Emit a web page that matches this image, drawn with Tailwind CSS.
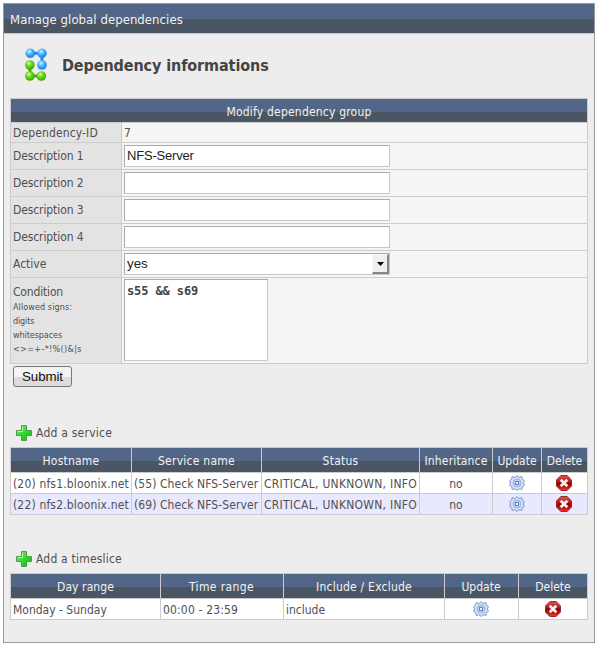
<!DOCTYPE html>
<html lang="en">
<head>
<meta charset="utf-8">
<title>Manage global dependencies</title>
<script src="https://cdn.jsdelivr.net/npm/@tailwindcss/browser@4"></script>
</head>
<body class="bg-white font-['DejaVu_Sans_Condensed','DejaVu_Sans',sans-serif] text-[12px] leading-[14px] text-[#505050]">

<svg class="absolute size-0" aria-hidden="true">
  <defs>
    <radialGradient id="blue" cx=".4" cy=".32" r=".68"><stop offset="0" stop-color="#e4f8ff"/><stop offset=".3" stop-color="#6cc8ff"/><stop offset=".7" stop-color="#2a9af5"/><stop offset="1" stop-color="#2389e6"/></radialGradient>
    <radialGradient id="green" cx=".4" cy=".32" r=".68"><stop offset="0" stop-color="#e2ffc0"/><stop offset=".3" stop-color="#86e238"/><stop offset=".7" stop-color="#4fc40c"/><stop offset="1" stop-color="#3fa50a"/></radialGradient>
    <linearGradient id="plusfill" x1="0" y1="0" x2="1" y2="1"><stop offset="0" stop-color="#8cf07a"/><stop offset=".5" stop-color="#2fdc2a"/><stop offset="1" stop-color="#12b312"/></linearGradient>
    <linearGradient id="red" x1="0" y1="0" x2="0" y2="1"><stop offset="0" stop-color="#d9564f"/><stop offset=".42" stop-color="#c01414"/><stop offset=".5" stop-color="#8e0000"/><stop offset=".75" stop-color="#c80c0c"/><stop offset="1" stop-color="#f03a30"/></linearGradient>
  </defs>
  <symbol id="plus" viewBox="0 0 16 16">
    <path d="M5.500 .6h5v4.900h5v5h-5v4.900h-5v-4.900h-5v-5h5z" fill="url(#plusfill)" stroke="#4f9a4c" stroke-width="1"/>
    <path d="M6.500 6.500v-5M1.500 6.500h5" stroke="#b9f7ae" stroke-width=".9" fill="none"/>
  </symbol>
  <symbol id="gear" viewBox="0 0 16 16">
    <path d="M8 .6l2 1.900 2.900-.9.4 2.600 2.100 1.500-1 2.300 1 2.400-2.200 1.300-.3 2.700-2.800-.6L8 15.400l-2.100-1.600-2.800.6-.3-2.700-2.200-1.300 1-2.400-1-2.300 2.100-1.500.4-2.600 2.900.9z" fill="#d6e1f7" stroke="#7e9ad2" stroke-width="1"/>
    <circle cx="8" cy="8" r="4" fill="#bfd0f1" stroke="#93abdd" stroke-width=".9"/>
    <rect x="6.500" y="6.500" width="3" height="3" fill="#f1f5fd" stroke="#6482c6" stroke-width="1"/>
  </symbol>
  <symbol id="delete" viewBox="0 0 16 16">
    <path d="M4.900 .5h6.200l4.400 4.400v6.200l-4.400 4.400H4.900L.5 11.100V4.900z" fill="url(#red)" stroke="#8d2020" stroke-width=".9"/>
    <path d="M4.700 4.700l6.600 6.600M11.300 4.700l-6.600 6.600" stroke="#f2f2f2" stroke-width="2.800"/>
  </symbol>
</svg>

<main class="ml-[3px] mt-[3px] flex h-[640px] w-[592px] flex-col border border-[#999] bg-[#ededed]">
  <header class="flex h-[30px] shrink-0 items-center border-b border-[#c4c4c4] bg-linear-to-b from-[#526788] from-[15px] to-[#4b5665] to-[15px] pl-[6px] pt-[2px] text-[13px] tracking-[0.06px] text-[#f2f2f2]">Manage global dependencies</header>

  <div class="flex h-[64px] shrink-0 items-center pl-[19px]">
    <svg class="-mt-[3px] mb-[3px] h-[36px] w-[28px]" viewBox="0 0 28 36">
      <path d="M7 8.300h12V20" fill="none" stroke="#2580e0" stroke-width="3"/>
      <path d="M7 20v11h11.500" fill="none" stroke="#46a80e" stroke-width="3"/>
      <g fill="url(#blue)"><circle cx="7.300" cy="8.300" r="4.800"/><circle cx="19" cy="8.300" r="4.800"/><circle cx="19" cy="20" r="4.800"/></g>
      <g fill="url(#green)"><circle cx="6.800" cy="20" r="4.800"/><circle cx="6.800" cy="31" r="4.800"/><circle cx="18.300" cy="31" r="4.800"/></g>
    </svg>
    <h1 class="ml-[11px] text-[16px] leading-[20px] font-bold tracking-[-0.1px] text-[#444]">Dependency informations</h1>
  </div>

  <section class="ml-[6px] grid w-[578px] shrink-0 grid-cols-[110px_465px] grid-rows-[23px_19px_26px_26px_26px_26px_26px_85px] gap-px bg-[#ccc] p-px *:flex">
    <div class="col-span-2 items-center justify-center bg-linear-to-b from-[#526788] from-[13px] to-[#4b5665] to-[13px] pt-[2px] tracking-[0.2px] text-[#f2f2f2]">Modify dependency group</div>

    <div class="items-center bg-[#e3e3e3] pl-[2px] pt-px tracking-[0.13px]">Dependency-ID</div>
    <div class="items-center bg-[#f5f5f5] pl-[2px] pt-px">7</div>

    <div class="items-center bg-[#e3e3e3] pl-[2px] tracking-[-0.1px]">Description 1</div>
    <div class="bg-[#f5f5f5] pl-[2px] pt-[2px]"><div class="flex h-[22px] w-[266px] items-center border border-[#c8c8c8] border-t-[#aaa] border-l-[#aaa] bg-white pl-[2px] font-['Liberation_Sans',Arial,sans-serif] text-[13px] tracking-[-0.2px] text-[#222]">NFS-Server</div></div>

    <div class="items-center bg-[#e3e3e3] pl-[2px] tracking-[-0.1px]">Description 2</div>
    <div class="bg-[#f5f5f5] pl-[2px] pt-[2px]"><div class="h-[22px] w-[266px] border border-[#c8c8c8] border-t-[#aaa] border-l-[#aaa] bg-white"></div></div>

    <div class="items-center bg-[#e3e3e3] pl-[2px] tracking-[-0.1px]">Description 3</div>
    <div class="bg-[#f5f5f5] pl-[2px] pt-[2px]"><div class="h-[22px] w-[266px] border border-[#c8c8c8] border-t-[#aaa] border-l-[#aaa] bg-white"></div></div>

    <div class="items-center bg-[#e3e3e3] pl-[2px] tracking-[-0.1px]">Description 4</div>
    <div class="bg-[#f5f5f5] pl-[2px] pt-[2px]"><div class="h-[22px] w-[266px] border border-[#c8c8c8] border-t-[#aaa] border-l-[#aaa] bg-white"></div></div>

    <div class="items-center bg-[#e3e3e3] pl-[2px]">Active</div>
    <div class="bg-[#f5f5f5] pl-[2px] pt-[2px]">
      <div class="flex h-[22px] w-[266px] items-center justify-between border border-[#c8c8c8] border-t-[#aaa] border-l-[#aaa] bg-white pl-[2px] font-['Liberation_Sans',Arial,sans-serif] text-[13.33px] text-[#222]">
        <span>yes</span>
        <span class="flex h-[20px] w-[17px] items-center justify-center border-r-2 border-b-2 border-t border-l border-t-[#f8f8f8] border-l-[#f8f8f8] border-r-[#858585] border-b-[#858585] bg-[#efefef]"><svg class="h-[4px] w-[7px]" viewBox="0 0 7 4"><path d="M0 0h7L3.500 4z" fill="#000"/></svg></span>
      </div>
    </div>

    <div class="flex-col bg-[#e3e3e3] pl-[2px] pt-[7px]">
      <div class="tracking-[-0.17px]">Condition</div>
      <div class="mt-px text-[9px] tracking-[0.07px]">Allowed signs:</div>
      <div class="text-[9px] tracking-[-0.15px]">digits</div>
      <div class="text-[9px] tracking-[-0.1px]">whitespaces</div>
      <div class="text-[9px] tracking-[0.32px]">&lt;&gt;=+-*!%()&amp;|s</div>
    </div>
    <div class="bg-[#f5f5f5] pl-[2px] pt-px"><div class="h-[82px] w-[144px] border border-[#c8c8c8] border-t-[#aaa] border-l-[#aaa] bg-white pl-[2px] pt-[4px] font-['DejaVu_Sans_Mono',monospace] text-[12px] font-bold tracking-[-0.1px] text-[#444]">s55 &amp;&amp; s69</div></div>
  </section>

  <div class="ml-[9px] mt-[2px] flex h-[21px] w-[59px] shrink-0 items-center justify-center rounded-[3px] border border-[#777] bg-linear-to-b from-[#f4f4f4] from-50% to-[#dcdcdc] to-50% font-['Liberation_Sans',Arial,sans-serif] text-[13.33px] tracking-[-0.1px] text-[#111]">Submit</div>

  <div class="ml-[12px] mt-[38px] flex h-[16px] shrink-0 items-center gap-[4px] tracking-[0.23px]"><svg class="size-[16px]"><use href="#plus"/></svg><span>Add a service</span></div>

  <section class="ml-[6px] mt-[6px] grid w-[578px] shrink-0 grid-cols-[120px_129px_157px_72px_48px_45px] grid-rows-[24px_20px_20px] gap-px bg-[#ccc] p-px whitespace-nowrap *:flex *:items-center">
    <div class="justify-center bg-linear-to-b from-[#526788] from-[13px] to-[#4b5665] to-[13px] pt-[2px] tracking-[0.22px] text-[#f2f2f2]">Hostname</div>
    <div class="justify-center bg-linear-to-b from-[#526788] from-[13px] to-[#4b5665] to-[13px] pt-[2px] tracking-[0.25px] text-[#f2f2f2]">Service name</div>
    <div class="justify-center bg-linear-to-b from-[#526788] from-[13px] to-[#4b5665] to-[13px] pt-[2px] tracking-[0.25px] text-[#f2f2f2]">Status</div>
    <div class="justify-center bg-linear-to-b from-[#526788] from-[13px] to-[#4b5665] to-[13px] pt-[2px] tracking-[0.16px] text-[#f2f2f2]">Inheritance</div>
    <div class="justify-center bg-linear-to-b from-[#526788] from-[13px] to-[#4b5665] to-[13px] pt-[2px] text-[#f2f2f2]">Update</div>
    <div class="justify-center bg-linear-to-b from-[#526788] from-[13px] to-[#4b5665] to-[13px] pt-[2px] text-[#f2f2f2]">Delete</div>

    <div class="bg-white pl-[2px] pt-[2px] tracking-[0.16px]">(20) nfs1.bloonix.net</div>
    <div class="bg-white pl-[2px] pt-[2px] tracking-[0.08px]">(55) Check NFS-Server</div>
    <div class="bg-white pl-[2px] pt-[2px] tracking-[0.26px]">CRITICAL, UNKNOWN, INFO</div>
    <div class="justify-center bg-white pt-[2px]">no</div>
    <div class="justify-center bg-white"><svg class="size-[16px]"><use href="#gear"/></svg></div>
    <div class="justify-center bg-white pr-px"><svg class="size-[16px]"><use href="#delete"/></svg></div>

    <div class="bg-[#e8e8ff] pl-[2px] pt-[2px] tracking-[0.16px]">(22) nfs2.bloonix.net</div>
    <div class="bg-[#e8e8ff] pl-[2px] pt-[2px] tracking-[0.08px]">(69) Check NFS-Server</div>
    <div class="bg-[#e8e8ff] pl-[2px] pt-[2px] tracking-[0.26px]">CRITICAL, UNKNOWN, INFO</div>
    <div class="justify-center bg-[#e8e8ff] pt-[2px]">no</div>
    <div class="justify-center bg-[#e8e8ff]"><svg class="size-[16px]"><use href="#gear"/></svg></div>
    <div class="justify-center bg-[#e8e8ff] pr-px"><svg class="size-[16px]"><use href="#delete"/></svg></div>
  </section>

  <div class="ml-[12px] mt-[36px] flex h-[16px] shrink-0 items-center gap-[4px] tracking-[0.2px]"><svg class="size-[16px]"><use href="#plus"/></svg><span>Add a timeslice</span></div>

  <section class="ml-[6px] mt-[6px] grid w-[578px] shrink-0 grid-cols-[149px_122px_160px_73px_68px] grid-rows-[24px_20px] gap-px bg-[#ccc] p-px whitespace-nowrap *:flex *:items-center">
    <div class="justify-center bg-linear-to-b from-[#526788] from-[13px] to-[#4b5665] to-[13px] pt-[2px] tracking-[0.1px] text-[#f2f2f2]">Day range</div>
    <div class="justify-center bg-linear-to-b from-[#526788] from-[13px] to-[#4b5665] to-[13px] pt-[2px] tracking-[0.38px] pr-px text-[#f2f2f2]">Time range</div>
    <div class="justify-center bg-linear-to-b from-[#526788] from-[13px] to-[#4b5665] to-[13px] pt-[2px] tracking-[0.23px] text-[#f2f2f2]">Include / Exclude</div>
    <div class="justify-center bg-linear-to-b from-[#526788] from-[13px] to-[#4b5665] to-[13px] pt-[2px] pr-px text-[#f2f2f2]">Update</div>
    <div class="justify-center bg-linear-to-b from-[#526788] from-[13px] to-[#4b5665] to-[13px] pt-[2px] text-[#f2f2f2]">Delete</div>

    <div class="bg-white pl-[2px] pt-[2px] tracking-[0px]">Monday - Sunday</div>
    <div class="bg-white pl-[2px] pt-[2px] tracking-[0.16px]">00:00 - 23:59</div>
    <div class="bg-white pl-[2px] pt-[2px]">include</div>
    <div class="justify-center bg-white pr-px"><svg class="size-[16px]"><use href="#gear"/></svg></div>
    <div class="justify-center bg-white"><svg class="size-[16px]"><use href="#delete"/></svg></div>
  </section>
</main>
</body>
</html>
